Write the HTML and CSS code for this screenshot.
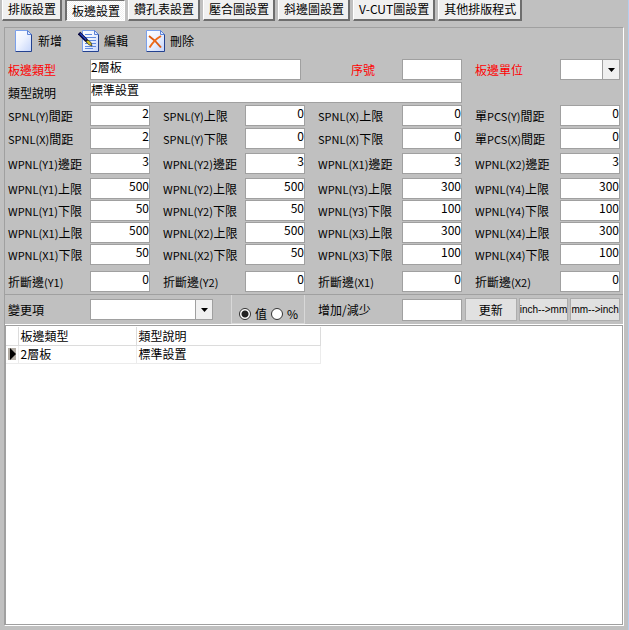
FILE: index.html
```html
<!DOCTYPE html>
<html lang="zh-Hant">
<head>
<meta charset="utf-8">
<title>板邊設置</title>
<link rel="stylesheet" href="styles.css">
</head>
<body>
<nav class="tabs">
  <button type="button" class="tab">排版設置</button>
  <button type="button" class="tab active">板邊設置</button>
  <button type="button" class="tab">鑽孔表設置</button>
  <button type="button" class="tab">壓合圖設置</button>
  <button type="button" class="tab">斜邊圖設置</button>
  <button type="button" class="tab">V-CUT圖設置</button>
  <button type="button" class="tab">其他排版程式</button>
</nav>

<main class="panel">
  <div class="toolbar">
    <button type="button" class="tool">
      <svg class="icon" width="22" height="22" viewBox="0 0 22 22" aria-hidden="true">
        <defs><linearGradient id="paper" x1="0" y1="0" x2="1" y2="1"><stop offset="0" stop-color="#fff"/><stop offset=".45" stop-color="#eef3ff"/><stop offset="1" stop-color="#c4d4fa"/></linearGradient></defs>
        <path d="M3.500 .5H16L19.500 4.500V21.500H3.500Z" fill="url(#paper)"/>
        <path d="M3.500 21V.5H16" fill="none" stroke="#7ba0ea"/>
        <path d="M15.500 .5V4.500H19.500Z" fill="#dfe8ff" stroke="#5c83d6"/>
        <path d="M19.500 4.500V21.500H3.500" fill="none" stroke="#23418f"/>
      </svg>新增</button>
    <button type="button" class="tool">
      <svg class="icon" width="22" height="22" viewBox="0 0 22 22" aria-hidden="true">
        <path d="M4.500 .5H17L20.500 4.500V21.500H4.500Z" fill="url(#paper)"/>
        <path d="M4.500 21V.5H17" fill="none" stroke="#7ba0ea"/>
        <path d="M16.500 .5V4.500H20.500Z" fill="#dfe8ff" stroke="#5c83d6"/>
        <path d="M20.500 4.500V21.500H4.500" fill="none" stroke="#23418f"/>
        <path d="M7 4.500H14M7 7.500H18M7 10.500H18M7 13.500H18M7 16.500H18M7 18.500H15" stroke="#5f8be0"/>
        <path d="M1 3L8.500 10.500" stroke="#05053c" stroke-width="3.600"/>
        <path d="M2 3.500L8.500 10" stroke="#2345c4" stroke-width="1.200"/>
        <path d="M8 10L10 12" stroke="#111" stroke-width="3"/>
        <path d="M8 11.500L10 10L13 12.500L14 16L10.500 14.500Z" fill="#d8c62c" stroke="#222" stroke-width=".7"/>
      </svg>編輯</button>
    <button type="button" class="tool">
      <svg class="icon" width="22" height="22" viewBox="0 0 22 22" aria-hidden="true">
        <path d="M2.500 .5H17L20.500 4.500V21.500H2.500Z" fill="url(#paper)"/>
        <path d="M2.500 21V.5H17" fill="none" stroke="#7ba0ea"/>
        <path d="M16.500 .5V4.500H20.500Z" fill="#dfe8ff" stroke="#5c83d6"/>
        <path d="M20.500 4.500V21.500H2.500" fill="none" stroke="#23418f"/>
        <path d="M5 6Q11 10 17 17.500" fill="none" stroke="#dd5b12" stroke-width="2"/>
        <path d="M17 6Q10 10 5.500 17.500" fill="none" stroke="#ee6b1a" stroke-width="2"/>
      </svg>刪除</button>
  </div>

  <form class="form">
    <div class="group">
      <label class="first required" for="type">板邊類型</label><input class="span-type" id="type" value="2層板">
      <label class="required serial" for="serial">序號</label><input id="serial">
      <label class="required" for="unit">板邊單位</label>
      <span class="combo"><select id="unit"><option></option></select><span class="drop"><svg width="7" height="4" viewBox="0 0 7 4" aria-hidden="true"><path d="M0 0H7L3.500 4Z"/></svg></span></span>

      <label class="first" for="desc">類型說明</label><input class="span-desc" id="desc" value="標準設置">

      <label class="first" for="a1"><span class="code">SPNL(Y)</span>間距</label><input class="num" id="a1" value="2">
      <label for="a2"><span class="code">SPNL(Y)</span>上限</label><input class="num" id="a2" value="0">
      <label for="a3"><span class="code">SPNL(X)</span>上限</label><input class="num" id="a3" value="0">
      <label for="a4">單<span class="code">PCS(Y)</span>間距</label><input class="num" id="a4" value="0">

      <label class="first" for="b1"><span class="code">SPNL(X)</span>間距</label><input class="num" id="b1" value="2">
      <label for="b2"><span class="code">SPNL(Y)</span>下限</label><input class="num" id="b2" value="0">
      <label for="b3"><span class="code">SPNL(X)</span>下限</label><input class="num" id="b3" value="0">
      <label for="b4">單<span class="code">PCS(X)</span>間距</label><input class="num" id="b4" value="0">
    </div>

    <div class="group">
      <label class="first" for="c1"><span class="code">WPNL(Y1)</span>邊距</label><input class="num" id="c1" value="3">
      <label for="c2"><span class="code">WPNL(Y2)</span>邊距</label><input class="num" id="c2" value="3">
      <label for="c3"><span class="code">WPNL(X1)</span>邊距</label><input class="num" id="c3" value="3">
      <label for="c4"><span class="code">WPNL(X2)</span>邊距</label><input class="num" id="c4" value="3">
    </div>

    <div class="group limits">
      <label class="first" for="d1"><span class="code">WPNL(Y1)</span>上限</label><input class="num" id="d1" value="500">
      <label for="d2"><span class="code">WPNL(Y2)</span>上限</label><input class="num" id="d2" value="500">
      <label for="d3"><span class="code">WPNL(Y3)</span>上限</label><input class="num" id="d3" value="300">
      <label for="d4"><span class="code">WPNL(Y4)</span>上限</label><input class="num" id="d4" value="300">

      <label class="first" for="e1"><span class="code">WPNL(Y1)</span>下限</label><input class="num" id="e1" value="50">
      <label for="e2"><span class="code">WPNL(Y2)</span>下限</label><input class="num" id="e2" value="50">
      <label for="e3"><span class="code">WPNL(Y3)</span>下限</label><input class="num" id="e3" value="100">
      <label for="e4"><span class="code">WPNL(Y4)</span>下限</label><input class="num" id="e4" value="100">

      <label class="first" for="f1"><span class="code">WPNL(X1)</span>上限</label><input class="num" id="f1" value="500">
      <label for="f2"><span class="code">WPNL(X2)</span>上限</label><input class="num" id="f2" value="500">
      <label for="f3"><span class="code">WPNL(X3)</span>上限</label><input class="num" id="f3" value="300">
      <label for="f4"><span class="code">WPNL(X4)</span>上限</label><input class="num" id="f4" value="300">

      <label class="first" for="g1"><span class="code">WPNL(X1)</span>下限</label><input class="num" id="g1" value="50">
      <label for="g2"><span class="code">WPNL(X2)</span>下限</label><input class="num" id="g2" value="50">
      <label for="g3"><span class="code">WPNL(X3)</span>下限</label><input class="num" id="g3" value="100">
      <label for="g4"><span class="code">WPNL(X4)</span>下限</label><input class="num" id="g4" value="100">
    </div>

    <div class="group">
      <label class="first" for="h1">折斷邊<span class="code">(Y1)</span></label><input class="num" id="h1" value="0">
      <label for="h2">折斷邊<span class="code">(Y2)</span></label><input class="num" id="h2" value="0">
      <label for="h3">折斷邊<span class="code">(X1)</span></label><input class="num" id="h3" value="0">
      <label for="h4">折斷邊<span class="code">(X2)</span></label><input class="num" id="h4" value="0">
    </div>
  </form>

  <form class="adjust">
    <label class="first" for="item">變更項</label>
    <span class="combo"><select id="item"><option></option></select><span class="drop"><svg width="7" height="4" viewBox="0 0 7 4" aria-hidden="true"><path d="M0 0H7L3.500 4Z"/></svg></span></span>
    <div class="modes">
      <label><input type="radio" name="mode" checked>值</label>
      <label><input type="radio" name="mode">%</label>
    </div>
    <label for="delta">增加/減少</label>
    <input id="delta">
    <div class="actions">
      <button type="button">更新</button>
      <button type="button" class="convert">inch--&gt;mm</button>
      <button type="button" class="convert">mm--&gt;inch</button>
    </div>
  </form>

  <section class="list">
    <table>
      <colgroup><col class="mark"><col class="kind"><col class="text"></colgroup>
      <thead><tr><th></th><th>板邊類型</th><th>類型說明</th></tr></thead>
      <tbody><tr><td class="current"><svg width="6" height="12" viewBox="0 0 6 12" aria-hidden="true"><path d="M0 0L6 6L0 12Z"/></svg></td><td>2層板</td><td>標準設置</td></tr></tbody>
    </table>
  </section>
</main>
</body>
</html>
```
FILE: styles.css
```css
* { box-sizing: border-box; }

body {
  margin: 0;
  min-height: 100vh;
  display: flex;
  flex-direction: column;
  background: #c0c0c0;
  border-right: 1px solid #b4cdec;
  color: #000;
  font: 12px/16px "Noto Sans CJK TC", "Liberation Sans", sans-serif;
}

button, input, select {
  margin: 0;
  font: inherit;
  color: inherit;
  border-radius: 0;
}

.tabs { display: flex; gap: 3px; padding-left: 2px; }

.tab {
  height: 21px;
  padding: 0 4px 1px 5px;
  white-space: nowrap;
  background: #f0f0f0;
  border: solid #fff;
  border-width: 0 0 0 1px;
  border-right: 2px solid #6e6e6e;
  border-bottom: 2px solid #6e6e6e;
}

.tab.active {
  padding: 1px 4px 0 5px;
  background: repeating-conic-gradient(#fff 0 25%, #f0f0f0 0 50%) 0 0 / 2px 2px;
  border-left: 2px solid #6e6e6e;
  border-top: 1px solid #6e6e6e;
  border-right: 1px solid #fff;
  border-bottom: 1px solid #fff;
}

.panel {
  flex: 1;
  display: flex;
  flex-direction: column;
  margin: 6px 4px 4px;
  border: 1px solid #a0a0a0;
  border-right-color: #fff;
  border-bottom-color: #fff;
}

.toolbar { display: flex; gap: 16px; height: 31px; padding: 2px 0 0 7px; }

.tool {
  display: flex;
  align-items: center;
  gap: 4px;
  height: 22px;
  padding: 0;
  background: none;
  border: 0;
}

.form { display: flex; flex-direction: column; gap: 4px; padding: 0 3px 2px 0; }

.group {
  display: grid;
  grid-template-columns:
    minmax(0, 85fr) minmax(0, 60fr) minmax(0, 95fr) minmax(0, 60fr)
    minmax(0, 97fr) minmax(0, 60fr) minmax(0, 98fr) minmax(0, 60fr);
  grid-auto-rows: 21px;
  gap: 2px 0;
}

.limits { row-gap: 1px; padding-bottom: 2px; }

.group > label, .adjust > label {
  align-self: center;
  min-width: 0;
  padding-left: 13px;
  white-space: nowrap;
}

.group > .first, .adjust > .first { grid-column: 1; padding-left: 3px; }
.group > .required { color: #f00; }
.group > .serial { grid-column: 5; padding-left: 46px; }

.code { font-size: 11px; }

.form input, .adjust > input {
  width: 100%;
  min-width: 0;
  padding: 0 0 5px;
  background: #fff;
  border: 1px solid #a0a0a0;
}

.form input.span-type { grid-column: 2 / 5; width: auto; margin-right: 4px; }
.form input.span-desc { grid-column: 2 / 7; }
.form input.num { text-align: right; }

.combo { display: grid; height: 21px; min-width: 0; }

.combo select {
  grid-area: 1 / 1;
  width: 100%;
  min-width: 0;
  appearance: none;
  padding: 0 18px 0 2px;
  background: #fff;
  border: 1px solid #a0a0a0;
}

.drop {
  grid-area: 1 / 1;
  justify-self: end;
  display: grid;
  place-items: center;
  width: 18px;
  background: #f0f0f0;
  border: 1px solid #a0a0a0;
  pointer-events: none;
}

.adjust {
  display: grid;
  grid-template-columns: 85fr 123fr 18fr 74fr 97fr 60fr 3fr 155fr;
  align-items: center;
  height: 31px;
  padding: 0 3px 0 0;
  border-top: 1px solid #a0a0a0;
  border-bottom: 1px solid #fff;
}

.adjust > input { height: 22px; }

.modes {
  grid-column: 4;
  display: flex;
  gap: 4px;
  align-self: stretch;
  align-items: end;
  padding: 0 0 1px 7px;
  border: solid #d8d8d8;
  border-width: 0 1px 1px;
}

.modes label { display: flex; align-items: center; gap: 4px; }

.modes input {
  appearance: none;
  width: 12px;
  height: 12px;
  background: #fff;
  border: 1px solid #333;
  border-radius: 50%;
}

.modes input:checked { background: radial-gradient(circle, #222 0 3px, #fff 4px); }

.actions { grid-column: 8; display: grid; grid-template-columns: 52fr 50fr 50fr; gap: 2px; }

.actions button {
  height: 23px;
  min-width: 0;
  padding: 0;
  overflow: hidden;
  white-space: nowrap;
  background: #e1e1e1;
  border: 1px solid #adadad;
}

.actions .convert { font-family: "Liberation Sans", sans-serif; font-size: 10px; }

.list {
  flex: 1;
  background: #fff;
  border: 1px solid #a0a0a0;
  padding-top: 1px;
}

table { border-collapse: collapse; table-layout: fixed; width: 314px; }
.mark { width: 12px; }
.kind { width: 118px; }
.text { width: 184px; }

th, td {
  height: 18px;
  padding: 0 2px;
  font-weight: normal;
  text-align: left;
  line-height: 16px;
  border: solid #dcdcdc;
  border-width: 0 1px 1px 0;
}

td { border-color: #ececec; }

.current { padding: 0 0 0 4px; background: linear-gradient(#b4aea6, #b4aea6) center / 8px 12px no-repeat; }
.current svg { display: block; }
```
